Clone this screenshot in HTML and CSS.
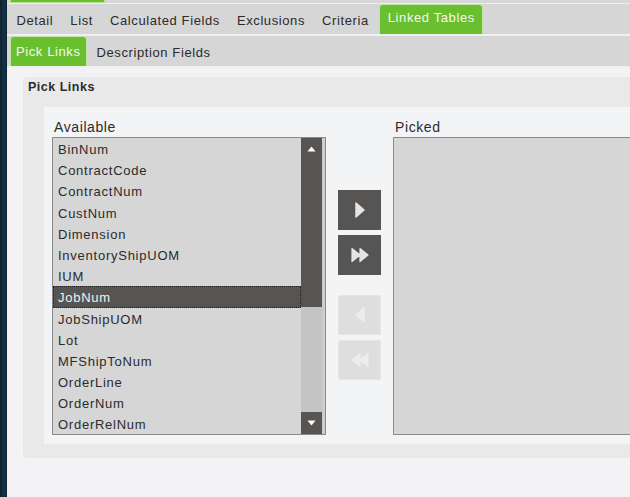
FILE: index.html
```html
<!DOCTYPE html>
<html lang="en">
<head>
  <meta charset="UTF-8" />
  <title>Linked Tables</title>
  <link rel="stylesheet" href="styles.css">
</head>
<body>
  <div class="side-strip"></div>

  <div class="main">
    <div class="top-strip"><span class="top-tab"></span></div>

    <div class="tab-bar">
      <span class="tab">Detail</span>
      <span class="tab">List</span>
      <span class="tab">Calculated Fields</span>
      <span class="tab">Exclusions</span>
      <span class="tab">Criteria</span>
      <span class="tab active">Linked Tables</span>
    </div>

    <div class="tab-bar sub">
      <span class="tab active">Pick Links</span>
      <span class="tab">Description Fields</span>
    </div>

    <div class="content">
      <div class="group">
        <div class="group-title">Pick Links</div>

        <div class="panel">
          <div class="col col-available">
            <div class="col-label">Available</div>
            <div class="listbox">
              <ul class="items" id="available-list"></ul>
              <div class="scrollbar">
                <div class="sb-arrow">
                  <svg width="9" height="6" viewBox="0 0 9 6"><path d="M4.5 0.5 L8.5 5.5 L0.5 5.5 Z" fill="#fff"/></svg>
                </div>
                <div class="sb-thumb"></div>
                <div class="sb-track"></div>
                <div class="sb-arrow">
                  <svg width="9" height="6" viewBox="0 0 9 6"><path d="M0.5 0.5 L8.5 0.5 L4.5 5.5 Z" fill="#fff"/></svg>
                </div>
              </div>
            </div>
          </div>

          <div class="move-buttons">
            <button class="move">
              <svg width="12" height="16" viewBox="0 0 12 16"><path d="M2 1 L10 8 L2 15 Z" fill="#e4e4e4" stroke="#e4e4e4" stroke-linejoin="round" stroke-width="1.5"/></svg>
            </button>
            <button class="move">
              <svg width="20" height="16" viewBox="0 0 20 16"><path d="M2 1.5 L10 8 L2 14.5 Z M10 1.5 L18 8 L10 14.5 Z" fill="#e4e4e4" stroke="#e4e4e4" stroke-linejoin="round" stroke-width="1.2"/></svg>
            </button>
            <button class="move disabled gap-above">
              <svg width="12" height="16" viewBox="0 0 12 16"><path d="M10 1 L2 8 L10 15 Z" fill="#ececec" stroke="#ececec" stroke-linejoin="round" stroke-width="1.5"/></svg>
            </button>
            <button class="move disabled">
              <svg width="20" height="16" viewBox="0 0 20 16"><path d="M10 1.5 L2 8 L10 14.5 Z M18 1.5 L10 8 L18 14.5 Z" fill="#ececec" stroke="#ececec" stroke-linejoin="round" stroke-width="1.2"/></svg>
            </button>
          </div>

          <div class="col col-picked">
            <div class="col-label">Picked</div>
            <div class="listbox empty"></div>
          </div>
        </div>
      </div>
    </div>
  </div>

  <script>
    const fields = [
      "BinNum", "ContractCode", "ContractNum", "CustNum", "Dimension",
      "InventoryShipUOM", "IUM", "JobNum", "JobShipUOM", "Lot",
      "MFShipToNum", "OrderLine", "OrderNum", "OrderRelNum"
    ];
    const list = document.getElementById("available-list");

    fields.forEach((name) => {
      const li = document.createElement("li");
      li.textContent = name;
      if (name === "JobNum") li.className = "selected";
      list.appendChild(li);
    });
  </script>
</body>
</html>
```

FILE: styles.css
```css
* { box-sizing: border-box; }

html, body {
  margin: 0;
  height: 100%;
  overflow: hidden;
}

body {
  display: flex;
  font-family: "Liberation Sans", Arial, sans-serif;
  font-size: 13px;
  color: #2b2b2b;
  background-color: #f3f3f5;
}

.side-strip {
  width: 7px;
  flex-shrink: 0;
  background: #0f3148;
  border-left: 2px solid #15232d;
  border-right: 1px solid #15232d;
}

.main {
  flex: 1;
  display: flex;
  flex-direction: column;
  min-width: 0;
}

.top-strip {
  height: 4px;
  border-bottom: 1px solid #f0f0f0;
  background: #d6d6d6;
}

.top-tab {
  display: block;
  width: 95px;
  height: 3px;
  margin-left: 3px;
  background: #6abf2f;
  border: 1px solid #b6dc9c;
  border-top: none;
}

.tab-bar {
  display: flex;
  align-items: flex-end;
  height: 32px;
  padding-left: 1px;
  background: #d6d6d6;
  border-bottom: 2px solid #f0f0f0;
}

.tab-bar.sub { padding-left: 3px; }

.tab {
  padding: 3px 7.5px 0;
  line-height: 26px;
  letter-spacing: 0.6px;
  border: 1px solid transparent;
  border-bottom: none;
  white-space: nowrap;
}

.tab.active {
  background: #6abf2f;
  color: #f4f9ee;
  border-color: #c3e3ad;
  border-radius: 4px 4px 0 0;
  padding: 0 7.5px 3px;
  line-height: 26px;
  margin-left: 2px;
}

.sub .tab.active {
  padding: 2px 5px 1px;
  margin-left: 0;
}

.sub .tab:last-child { padding-left: 9px; }

.content {
  flex: 1;
  padding: 9px 0 0 16px;
}

.group {
  background: #e9e9e9;
  border-radius: 4px 0 0 4px;
  padding: 0 0 14px 21px;
  margin-right: -20px;
}

.group-title {
  font-weight: bold;
  font-size: 12.5px;
  letter-spacing: 0.5px;
  line-height: 20px;
  padding: 0 0 10px 0;
  margin-left: -16px;
}

.panel {
  display: flex;
  gap: 12px;
  background: #f3f4f6;
  padding: 10px 0 9px 8px;
}

.col-label {
  font-size: 14px;
  letter-spacing: 0.6px;
  line-height: 20px;
  padding-left: 2px;
}

.listbox {
  display: flex;
  height: 298px;
  border: 1px solid #8a8a8a;
  background: #d6d6d6;
}

.col-available .listbox { width: 274px; }

.col-picked { flex: 1; }

.items {
  list-style: none;
  margin: 0;
  padding: 0;
  flex: 1;
}

.items li {
  height: 21.2px;
  line-height: 21px;
  padding-left: 4px;
  letter-spacing: 0.75px;
  border: 1px dotted transparent;
}

.items li.selected {
  background: #575553;
  color: #f2f2f2;
  border-color: #1e1e1e;
}

.scrollbar {
  width: 24px;
  display: flex;
  flex-direction: column;
  background: #c4c4c4;
  border-right: 3px solid #cdcdcd;
}

.sb-arrow {
  height: 22px;
  background: #575553;
  display: flex;
  align-items: center;
  justify-content: center;
}

.sb-thumb {
  height: 147px;
  background: #575553;
}

.sb-track { flex: 1; }

.move-buttons {
  display: flex;
  flex-direction: column;
  gap: 5px;
  padding-top: 73px;
}

.move {
  width: 43px;
  height: 40px;
  border: none;
  padding: 0;
  background: #575553;
  display: flex;
  align-items: center;
  justify-content: center;
}

.move.disabled {
  background: #dedede;
  border: 1px solid #e6e6e6;
}

.move.gap-above { margin-top: 15px; }
```
